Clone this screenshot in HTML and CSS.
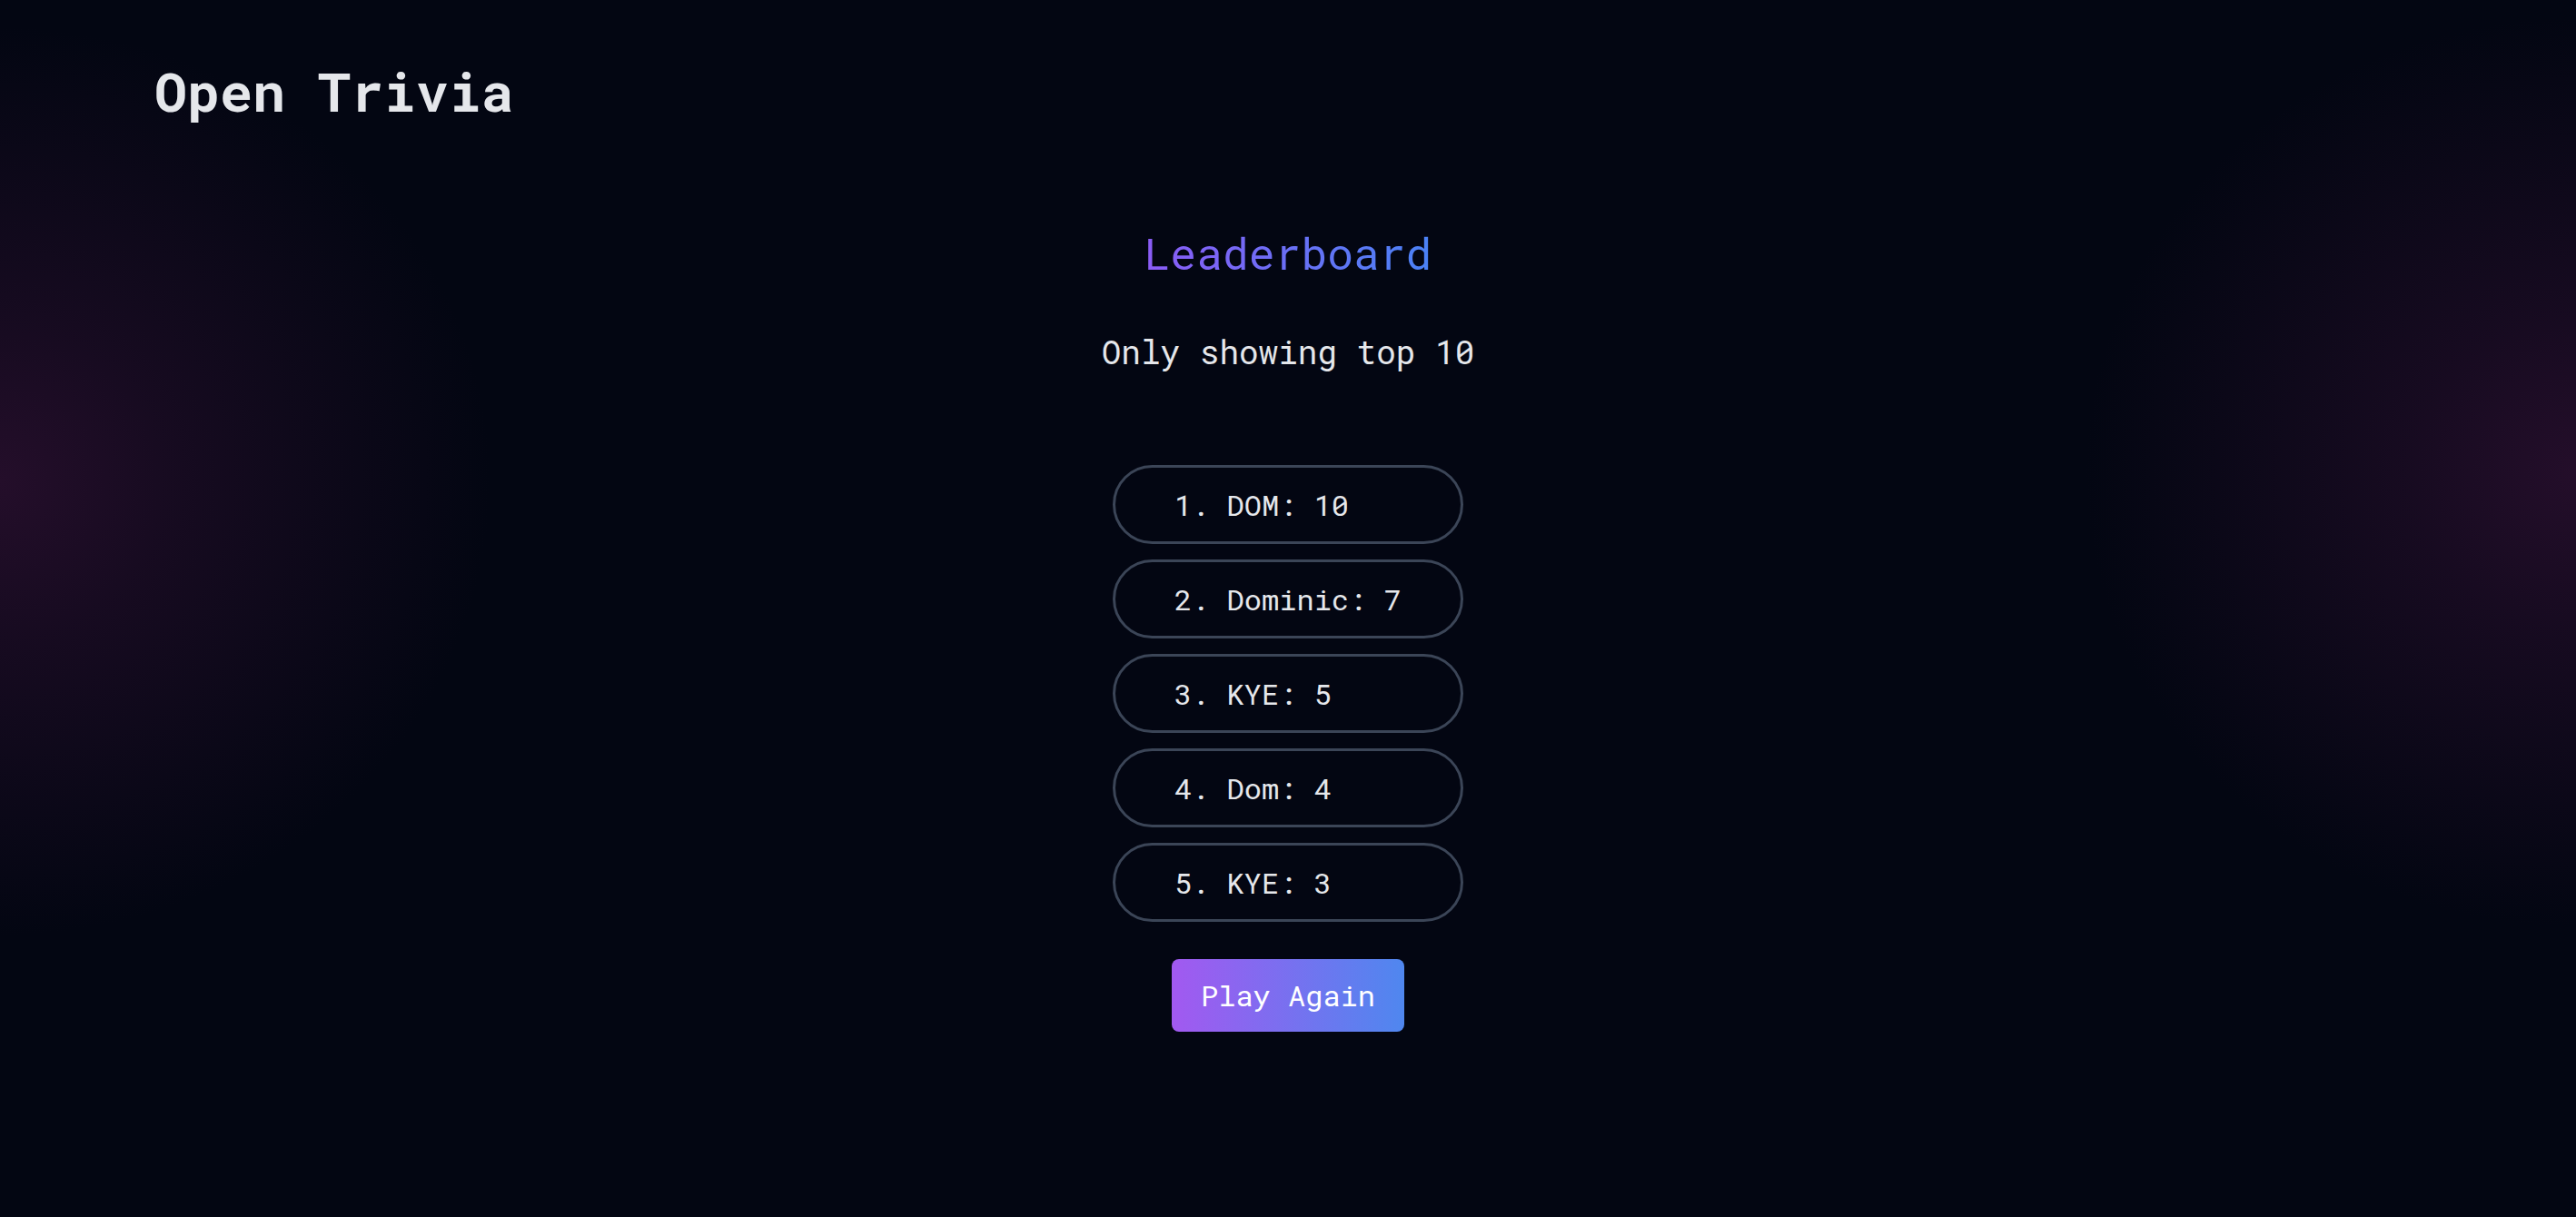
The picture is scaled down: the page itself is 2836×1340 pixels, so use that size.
FILE: index.html
```html
<!DOCTYPE html>
<html lang="en">
<head>
<meta charset="utf-8">
<title>Open Trivia</title>
<link rel="stylesheet" href="styles.css">
</head>
<body>
<div class="page">
  <header class="header">
    <h1 class="brand">Open Trivia</h1>
  </header>
  <main class="board">
    <h2 class="board-title">Leaderboard</h2>
    <p class="board-note">Only showing top 10</p>
    <ul class="scores">
      <li class="score">1. DOM: 10</li>
      <li class="score">2. Dominic: 7</li>
      <li class="score">3. KYE: 5</li>
      <li class="score">4. Dom: 4</li>
      <li class="score">5. KYE: 3</li>
    </ul>
    <button class="play" type="button">Play Again</button>
  </main>
</div>
</body>
</html>
```
FILE: styles.css
```css
* { box-sizing: border-box; }

html, body {
  margin: 0;
  padding: 0;
  height: 100%;
}

body {
  font-family: "Roboto Mono", "DejaVu Sans Mono", "Liberation Mono", monospace;
  color: #e5e7eb;
  background-color: #030612;
  background-image:
    radial-gradient(ellipse 540px 500px at 0 530px, rgba(36, 14, 42, 1) 0%, rgba(36, 14, 42, 0.6) 35%, rgba(36, 14, 42, 0) 100%),
    radial-gradient(ellipse 540px 500px at 100% 520px, rgba(36, 14, 42, 1) 0%, rgba(36, 14, 42, 0.6) 35%, rgba(36, 14, 42, 0) 100%);
  background-repeat: no-repeat;
  min-height: 1340px;
}

.page {
  display: flex;
  flex-direction: column;
}

.header {
  padding: 70px 0 0 170px;
}

.brand {
  margin: 0;
  font-size: 60px;
  line-height: 60px;
  font-weight: 700;
  color: #e5e7eb;
}

.board {
  display: flex;
  flex-direction: column;
  align-items: center;
  padding-top: 125px;
}

.board-title {
  margin: 0;
  font-size: 48px;
  line-height: 48px;
  font-weight: 400;
  background: linear-gradient(to right, #8b5cf6, #4a82f5);
  -webkit-background-clip: text;
  background-clip: text;
  color: transparent;
}

.board-note {
  margin: 64px 0 0;
  font-size: 36px;
  line-height: 40px;
  color: #e5e7eb;
}

.scores {
  list-style: none;
  margin: 105px 0 0;
  padding: 0;
  display: flex;
  flex-direction: column;
  gap: 17px;
}

.score {
  width: 386px;
  height: 87px;
  border: 3px solid #3b4557;
  border-radius: 9999px;
  padding: 0 0 0 65px;
  display: flex;
  align-items: center;
  font-size: 32px;
  line-height: 48px;
  color: #e5e7eb;
}

.play {
  margin-top: 41px;
  width: 256px;
  height: 80px;
  border: 0;
  border-radius: 8px;
  background: linear-gradient(to right, #a259f0, #4f87ef);
  color: #ffffff;
  font-family: inherit;
  font-size: 32px;
  line-height: 48px;
  padding: 0;
}
```
